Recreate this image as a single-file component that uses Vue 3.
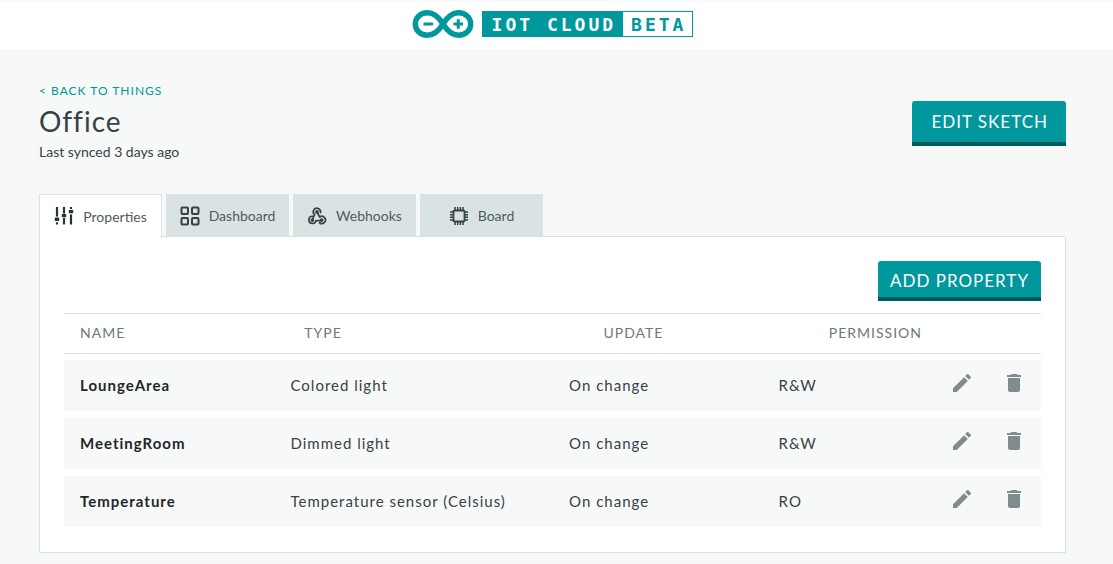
<script setup>
import { ref } from 'vue'

const activeTab = ref('Properties')
const tabs = ['Properties', 'Dashboard', 'Webhooks', 'Board']
const properties = [
  { name: 'LoungeArea', type: 'Colored light', update: 'On change', permission: 'R&W' },
  { name: 'MeetingRoom', type: 'Dimmed light', update: 'On change', permission: 'R&W' },
  { name: 'Temperature', type: 'Temperature sensor (Celsius)', update: 'On change', permission: 'RO' }
]
</script>

<template>
  <div class="page">
    <header class="topbar">
      <svg class="logo" viewBox="0 0 62 30" aria-hidden="true">
        <path d="M31 15C27 8.500 22.500 3.800 15.500 3.800C8.500 3.800 3.300 8.500 3.300 15S8.500 26.200 15.500 26.200C22.500 26.200 27 21.500 31 15C35 8.500 39.500 3.800 46.500 3.800C53.500 3.800 58.700 8.500 58.700 15S53.500 26.200 46.500 26.200C39.500 26.200 35 21.500 31 15Z" fill="none" stroke="#00979d" stroke-width="5.400" />
        <path d="M11.500 15h9.500M41.500 15h9.500M46.250 10.250v9.500" fill="none" stroke="#00979d" stroke-width="3" />
      </svg>
      <div class="wordmark"><span class="product">IOT CLOUD</span><span class="beta">BETA</span></div>
    </header>

    <main class="content">
      <div class="heading">
        <div>
          <a class="back" href="#">&lt; BACK TO THINGS</a>
          <h1>Office</h1>
          <p class="synced">Last synced 3 days ago</p>
        </div>
        <button class="action edit-sketch" type="button">EDIT SKETCH</button>
      </div>

      <nav class="tabs">
        <button
          v-for="tab in tabs"
          :key="tab"
          type="button"
          class="tab"
          :class="{ active: tab === activeTab }"
          @click="activeTab = tab"
        >
          <svg v-if="tab === 'Properties'" viewBox="0 0 20 20" class="tab-icon">
            <path d="M3 1v9.500M3 16.200v2.300M10 1v6.500M10 12v6.500M17 1v2M17 8.500v10" stroke="#263238" stroke-width="2.200" />
            <path d="M.8 11.500h4.400v3.500h-4.400zM7.800 8h4.400v3.300h-4.400zM14.800 4h4.400v3.300h-4.400z" fill="#263238" />
          </svg>
          <svg v-else-if="tab === 'Dashboard'" viewBox="0 0 20 20" class="tab-icon">
            <g fill="none" stroke="#374146" stroke-width="2">
              <rect x="1.500" y="1.500" width="6.500" height="6.500" rx="1" />
              <rect x="12" y="1.500" width="6.500" height="6.500" rx="1" />
              <rect x="1.500" y="12" width="6.500" height="6.500" rx="1" />
              <rect x="12" y="12" width="6.500" height="6.500" rx="1" />
            </g>
          </svg>
          <svg v-else-if="tab === 'Webhooks'" viewBox="0 0 26 26" class="tab-icon">
            <g transform="translate(1 1)" fill="none" stroke="#374146" stroke-width="2.200" stroke-linecap="round" stroke-linejoin="round">
              <path d="M16.500 7.500A4.700 4.700 0 1 0 9 10.300L6.500 15" />
              <path d="M6.300 12.300A4.700 4.700 0 1 0 10.700 18H17" />
              <path d="M12 7L15.500 13.300A4.700 4.700 0 1 1 15.300 20.800" />
              <circle cx="12" cy="6.700" r="1.300" />
              <circle cx="6" cy="17.300" r="1.300" />
              <circle cx="18" cy="17.300" r="1.300" />
            </g>
          </svg>
          <svg v-else viewBox="0 0 20 20" class="tab-icon">
            <path d="M6 1v3M8.700 1v3M11.300 1v3M14 1v3M6 16v3M8.700 16v3M11.300 16v3M14 16v3M1 6h3M1 8.700h3M1 11.300h3M1 14h3M16 6h3M16 8.700h3M16 11.300h3M16 14h3" stroke="#374146" stroke-width="1.500" />
            <rect x="4.500" y="4.500" width="11" height="11" rx="1" fill="none" stroke="#374146" stroke-width="1.800" />
          </svg>
          <span>{{ tab }}</span>
        </button>
      </nav>

      <section class="panel">
        <button class="action add-property" type="button">ADD PROPERTY</button>
        <table>
          <thead>
            <tr>
              <th scope="col">NAME</th>
              <th scope="col">TYPE</th>
              <th scope="col">UPDATE</th>
              <th scope="col">PERMISSION</th>
            </tr>
          </thead>
          <tbody>
            <tr v-for="item in properties" :key="item.name">
              <td class="name">{{ item.name }}</td>
              <td>{{ item.type }}</td>
              <td>{{ item.update }}</td>
              <td>{{ item.permission }}</td>
              <td class="tools">
                <button type="button" :aria-label="`Edit ${item.name}`">
                  <svg viewBox="3 3 18 18"><path d="M3 17.250V21h3.750L17.810 9.940l-3.750-3.750L3 17.250zM20.710 7.040a1 1 0 0 0 0-1.410l-2.340-2.340a1 1 0 0 0-1.410 0l-1.830 1.830 3.750 3.750 1.830-1.830z" /></svg>
                </button>
                <button type="button" :aria-label="`Delete ${item.name}`">
                  <svg viewBox="3 3 18 18"><path d="M6 19c0 1.100.9 2 2 2h8c1.100 0 2-.9 2-2V7H6v12zM19 4h-3.500l-1-1h-5l-1 1H5v2h14V4z" /></svg>
                </button>
              </td>
            </tr>
          </tbody>
        </table>
      </section>
    </main>
  </div>
</template>

<style>
body {
  margin: 0;
  background: #f7f9f9;
}
</style>

<style scoped>
* {
  box-sizing: border-box;
}
.page {
  color: #374146;
  font-family: Lato, "Noto Sans", sans-serif;
  letter-spacing: 1px;
}
button {
  font: inherit;
  letter-spacing: inherit;
  border: 0;
  cursor: pointer;
}
.topbar {
  display: flex;
  align-items: center;
  justify-content: center;
  gap: 8px;
  height: 49px;
  padding: 0 8px 2px 0;
  background: #fff;
  border-top: 1px solid #f7f9f9;
}
.logo {
  width: 62px;
  height: 30px;
}
.wordmark {
  display: flex;
  height: 26px;
  border: 1px solid #00979d;
  font: bold 18px/26px "DejaVu Sans Mono", monospace;
  letter-spacing: 3px;
}
.product {
  padding: 0 7px 0 9px;
  background: #00979d;
  color: #fff;
}
.beta {
  padding: 0 6px 0 8px;
  color: #00979d;
}
.content {
  padding: 33px 47px 11px 39px;
}
.heading {
  display: flex;
  justify-content: space-between;
  align-items: flex-start;
}
.back {
  display: block;
  color: #00979d;
  font-size: 12px;
  line-height: 18px;
  text-decoration: none;
}
h1 {
  margin: 4px 0;
  font-size: 28px;
  font-weight: 400;
  line-height: 34px;
}
.synced {
  margin: 0;
  font-size: 14px;
  line-height: 20px;
  letter-spacing: 0;
}
.action {
  border-bottom: 4px solid #005b60;
  border-radius: 3px 3px 0 0;
  background: #00979d;
  color: #fff;
  font-size: 17px;
}
.edit-sketch {
  height: 45px;
  margin-top: 19px;
  padding: 0 18px 0 19px;
}
.tabs {
  display: flex;
  gap: 4px;
  margin-top: 32px;
}
.tab {
  display: flex;
  align-items: center;
  justify-content: center;
  gap: 9px;
  width: 123px;
  height: 43px;
  padding: 0;
  border: 1px solid #dae3e3;
  background: #dae3e3;
  color: #4e5b61;
  font-size: 14px;
  letter-spacing: 0;
}
.tab.active {
  z-index: 1;
  height: 44px;
  margin-bottom: -1px;
  padding-bottom: 1px;
  border-bottom: 0;
  background: #fff;
}
.tab-icon {
  width: 20px;
  height: 20px;
}
.panel {
  display: flex;
  flex-direction: column;
  margin-top: -1px;
  padding: 24px 24px 25px;
  border: 1px solid #dae3e3;
  background: #fff;
}
.add-property {
  align-self: flex-end;
  height: 40px;
  padding: 2px 12px 0;
}
table,
thead,
tbody {
  display: block;
}
table {
  margin-top: 12px;
}
tr {
  display: grid;
  align-items: center;
}
thead tr {
  grid-template-columns: 224fr 299fr 225fr 212fr;
  height: 41px;
  padding: 0 0 2px 16px;
  border-top: 1px solid #dae3e3;
  border-bottom: 1px solid #dae3e3;
}
th {
  padding: 0;
  color: #6c787c;
  font-size: 14px;
  font-weight: 400;
  text-align: left;
}
tbody {
  display: grid;
  gap: 7px;
  padding-top: 6px;
}
tbody tr {
  grid-template-columns: 210fr 278fr 209fr 174fr 88px;
  height: 51px;
  padding: 0 0 2px 16px;
  background: #f7f9f9;
}
td {
  padding: 0;
  font-size: 15px;
}
.name {
  color: #1f272a;
  font-weight: 700;
}
.tools {
  display: flex;
  gap: 34px;
  padding-bottom: 4px;
}
.tools button {
  display: flex;
  padding: 0;
  background: none;
}
.tools svg {
  width: 18px;
  height: 18px;
  fill: #7f8c8d;
}
</style>
